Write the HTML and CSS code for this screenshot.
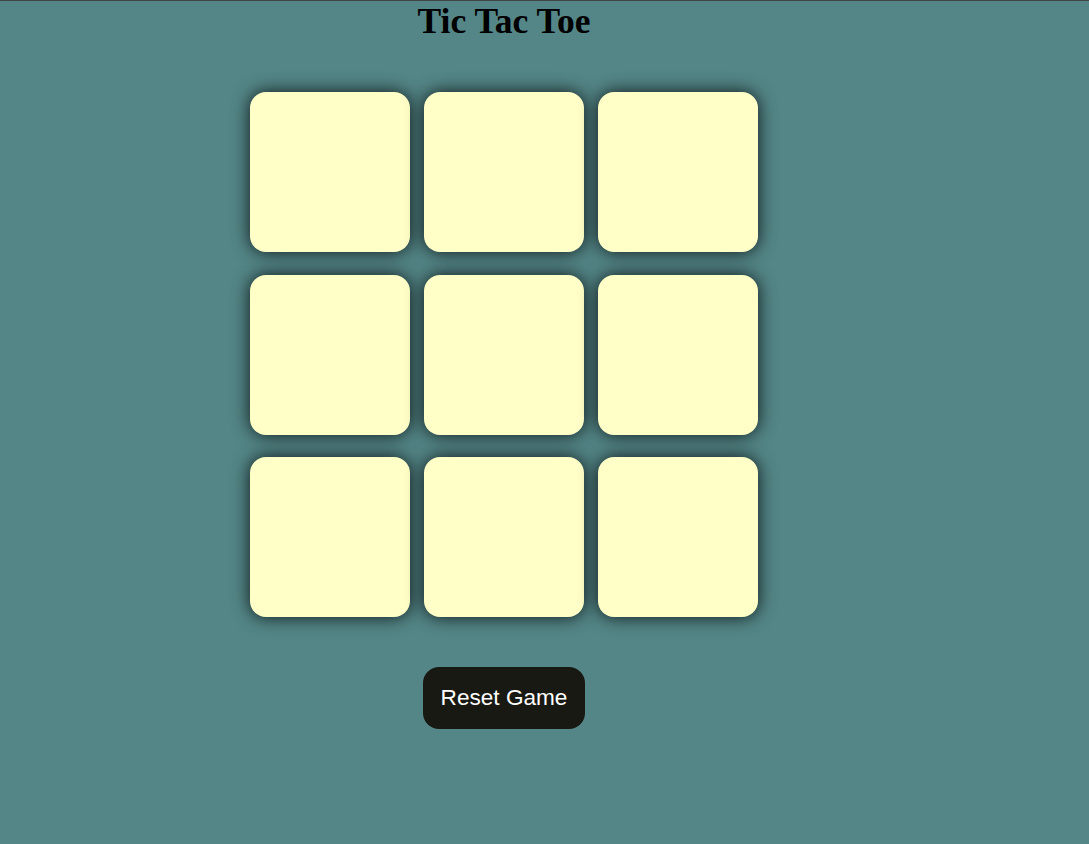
FILE: index.html
```html
<!DOCTYPE html>
<html lang="en">
<head>
<meta charset="utf-8">
<title>Tic Tac Toe</title>
<link rel="stylesheet" href="styles.css">
</head>
<body>
<main class="main">
  <h1 class="title">Tic Tac Toe</h1>
  <div class="board">
    <button class="box"></button>
    <button class="box"></button>
    <button class="box"></button>
    <button class="box"></button>
    <button class="box"></button>
    <button class="box"></button>
    <button class="box"></button>
    <button class="box"></button>
    <button class="box"></button>
  </div>
  <button class="reset">Reset Game</button>
</main>
</body>
</html>
```

FILE: styles.css
```css
html, body {
  margin: 0;
  padding: 0;
}
body {
  background: #548687;
  border-top: 1px solid #3f4444;
  min-height: 843px;
  font-family: "Liberation Serif", serif;
}
.main {
  width: 1008px;
  display: flex;
  flex-direction: column;
  align-items: center;
}
.title {
  margin: 0;
  padding-top: 0;
  height: 41px;
  font-size: 35.5px;
  font-weight: bold;
  color: #000;
  line-height: 41px;
}
.board {
  margin-top: 50px;
  display: grid;
  grid-template-columns: repeat(3, 160px);
  grid-template-rows: repeat(3, 160px);
  column-gap: 14px;
  row-gap: 22.5px;
}
.box {
  width: 160px;
  height: 160px;
  border: none;
  border-radius: 16px;
  background: #ffffc7;
  box-shadow: 0 0 1.1rem rgba(0, 0, 0, 0.85);
  padding: 0;
}
.reset {
  margin-top: 50px;
  padding: 18px 18px;
  background: #191913;
  color: #fff;
  border: none;
  border-radius: 16px;
  font-family: "Liberation Sans", Arial, sans-serif;
  font-size: 22.6px;
  line-height: 26px;
}
```
